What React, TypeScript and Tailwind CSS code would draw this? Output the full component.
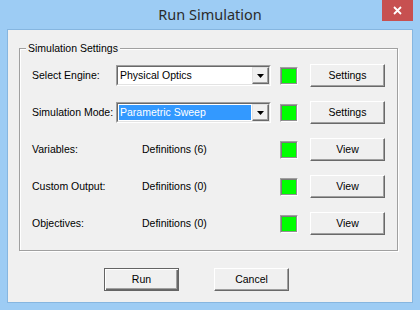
import React from "react";

const font = { fontFamily: '"Liberation Sans", Arial, sans-serif' };

function ClassicButton({ label, isDefault = false }: { label: string; isDefault?: boolean }) {
  return (
    <button
      className={
        "w-[75px] h-[23px] bg-[#f0f0f0] text-[10.5px] text-black flex items-center justify-center " +
        (isDefault
          ? "border border-[#646464] shadow-[inset_1px_1px_0_#ffffff,inset_-1px_-1px_0_#696969,inset_-2px_-2px_0_#a0a0a0]"
          : "border-t border-l border-t-white border-l-white border-r border-b border-r-[#696969] border-b-[#696969] shadow-[inset_-1px_-1px_0_#a0a0a0]")
      }
    >
      {label}
    </button>
  );
}

function StatusBox() {
  return (
    <span className="w-[18px] h-[18px] flex border-t border-l border-t-[#a0a0a0] border-l-[#a0a0a0] border-r border-b border-r-white border-b-white">
      <span className="flex-1 bg-[#00ff00] border border-[#7a7a7a] border-r-[#909090] border-b-[#909090]" />
    </span>
  );
}

function Combo({ value, selected = false }: { value: string; selected?: boolean }) {
  return (
    <div className="w-[155px] h-[21px] flex border-t border-l border-t-[#a0a0a0] border-l-[#a0a0a0] border-r border-b border-r-white border-b-white">
      <div className="flex-1 flex bg-white border-t border-l border-t-[#696969] border-l-[#696969] border-r border-b border-r-[#e3e3e3] border-b-[#e3e3e3]">
        <div className="flex-1 p-[1px] flex">
          <div
            className={
              "flex-1 flex items-center pl-[1px] pt-[1px] text-[10.5px] " +
              (selected ? "bg-[#3399ff] text-white" : "text-black")
            }
          >
            {value}
          </div>
        </div>
        <div className="w-[17px] flex items-center justify-center bg-[#f0f0f0] border-t border-l border-t-[#e3e3e3] border-l-[#e3e3e3] border-r border-b border-r-[#696969] border-b-[#696969] shadow-[inset_-1px_-1px_0_#a0a0a0]">
          <svg width="7" height="4" viewBox="0 0 7 4">
            <path d="M0 0h7L3.5 4z" fill="#000" />
          </svg>
        </div>
      </div>
    </div>
  );
}

type Row = {
  label: string;
  combo?: string;
  selected?: boolean;
  text?: string;
  button: string;
};

const rows: Row[] = [
  { label: "Select Engine:", combo: "Physical Optics", button: "Settings" },
  { label: "Simulation Mode:", combo: "Parametric Sweep", selected: true, button: "Settings" },
  { label: "Variables:", text: "Definitions (6)", button: "View" },
  { label: "Custom Output:", text: "Definitions (0)", button: "View" },
  { label: "Objectives:", text: "Definitions (0)", button: "View" },
];

export default function App() {
  return (
    <div className="w-[420px] h-[310px] bg-[#9dccf4] flex flex-col" style={font}>
      {/* Title bar */}
      <div className="relative h-[29px] flex items-center justify-center">
        <span
          className="text-[14.5px] text-[#2b2b2b] pt-[1px]"
          style={{ fontFamily: '"Noto Sans", "Open Sans", sans-serif' }}
        >
          Run Simulation
        </span>
        <div className="absolute top-0 right-[7px] w-[31px] h-[21px] bg-[#c75050] flex items-center justify-center">
          <svg width="9" height="9" viewBox="0 0 9 9">
            <path d="M1 1l7 7M8 1L1 8" stroke="#fff" strokeWidth="1.8" />
          </svg>
        </div>
      </div>

      {/* Client area */}
      <div className="mx-[7px] h-[274px] border border-[#86b6e0] bg-[#f0f0f0] flex flex-col">
        {/* Group box */}
        <div className="relative ml-[11px] mt-[18px] w-[379px] h-[203px] border border-[#a0a0a0] shadow-[inset_1px_1px_0_#ffffff,1px_1px_0_#ffffff] pt-[8px] pb-[8px] pl-[12px]">
          <span className="absolute left-[6px] top-[-8px] px-[2px] bg-[#f0f0f0] text-[10.5px] text-black leading-[14px]">
            Simulation Settings
          </span>
          {rows.map((r) => (
            <div key={r.label} className="h-[37px] flex items-center text-[10.5px] text-black">
              <div className="w-[84px] pt-[1px]">{r.label}</div>
              <div className="w-[155px]">
                {r.combo ? (
                  <Combo value={r.combo} selected={r.selected} />
                ) : (
                  <span className="pl-[26px]">{r.text}</span>
                )}
              </div>
              <div className="ml-[9px]">
                <StatusBox />
              </div>
              <div className="ml-[12px]">
                <ClassicButton label={r.button} />
              </div>
            </div>
          ))}
        </div>

        {/* Dialog buttons */}
        <div className="mt-[17px] ml-[96px] flex gap-[35px]">
          <ClassicButton label="Run" isDefault />
          <ClassicButton label="Cancel" />
        </div>
      </div>
    </div>
  );
}
